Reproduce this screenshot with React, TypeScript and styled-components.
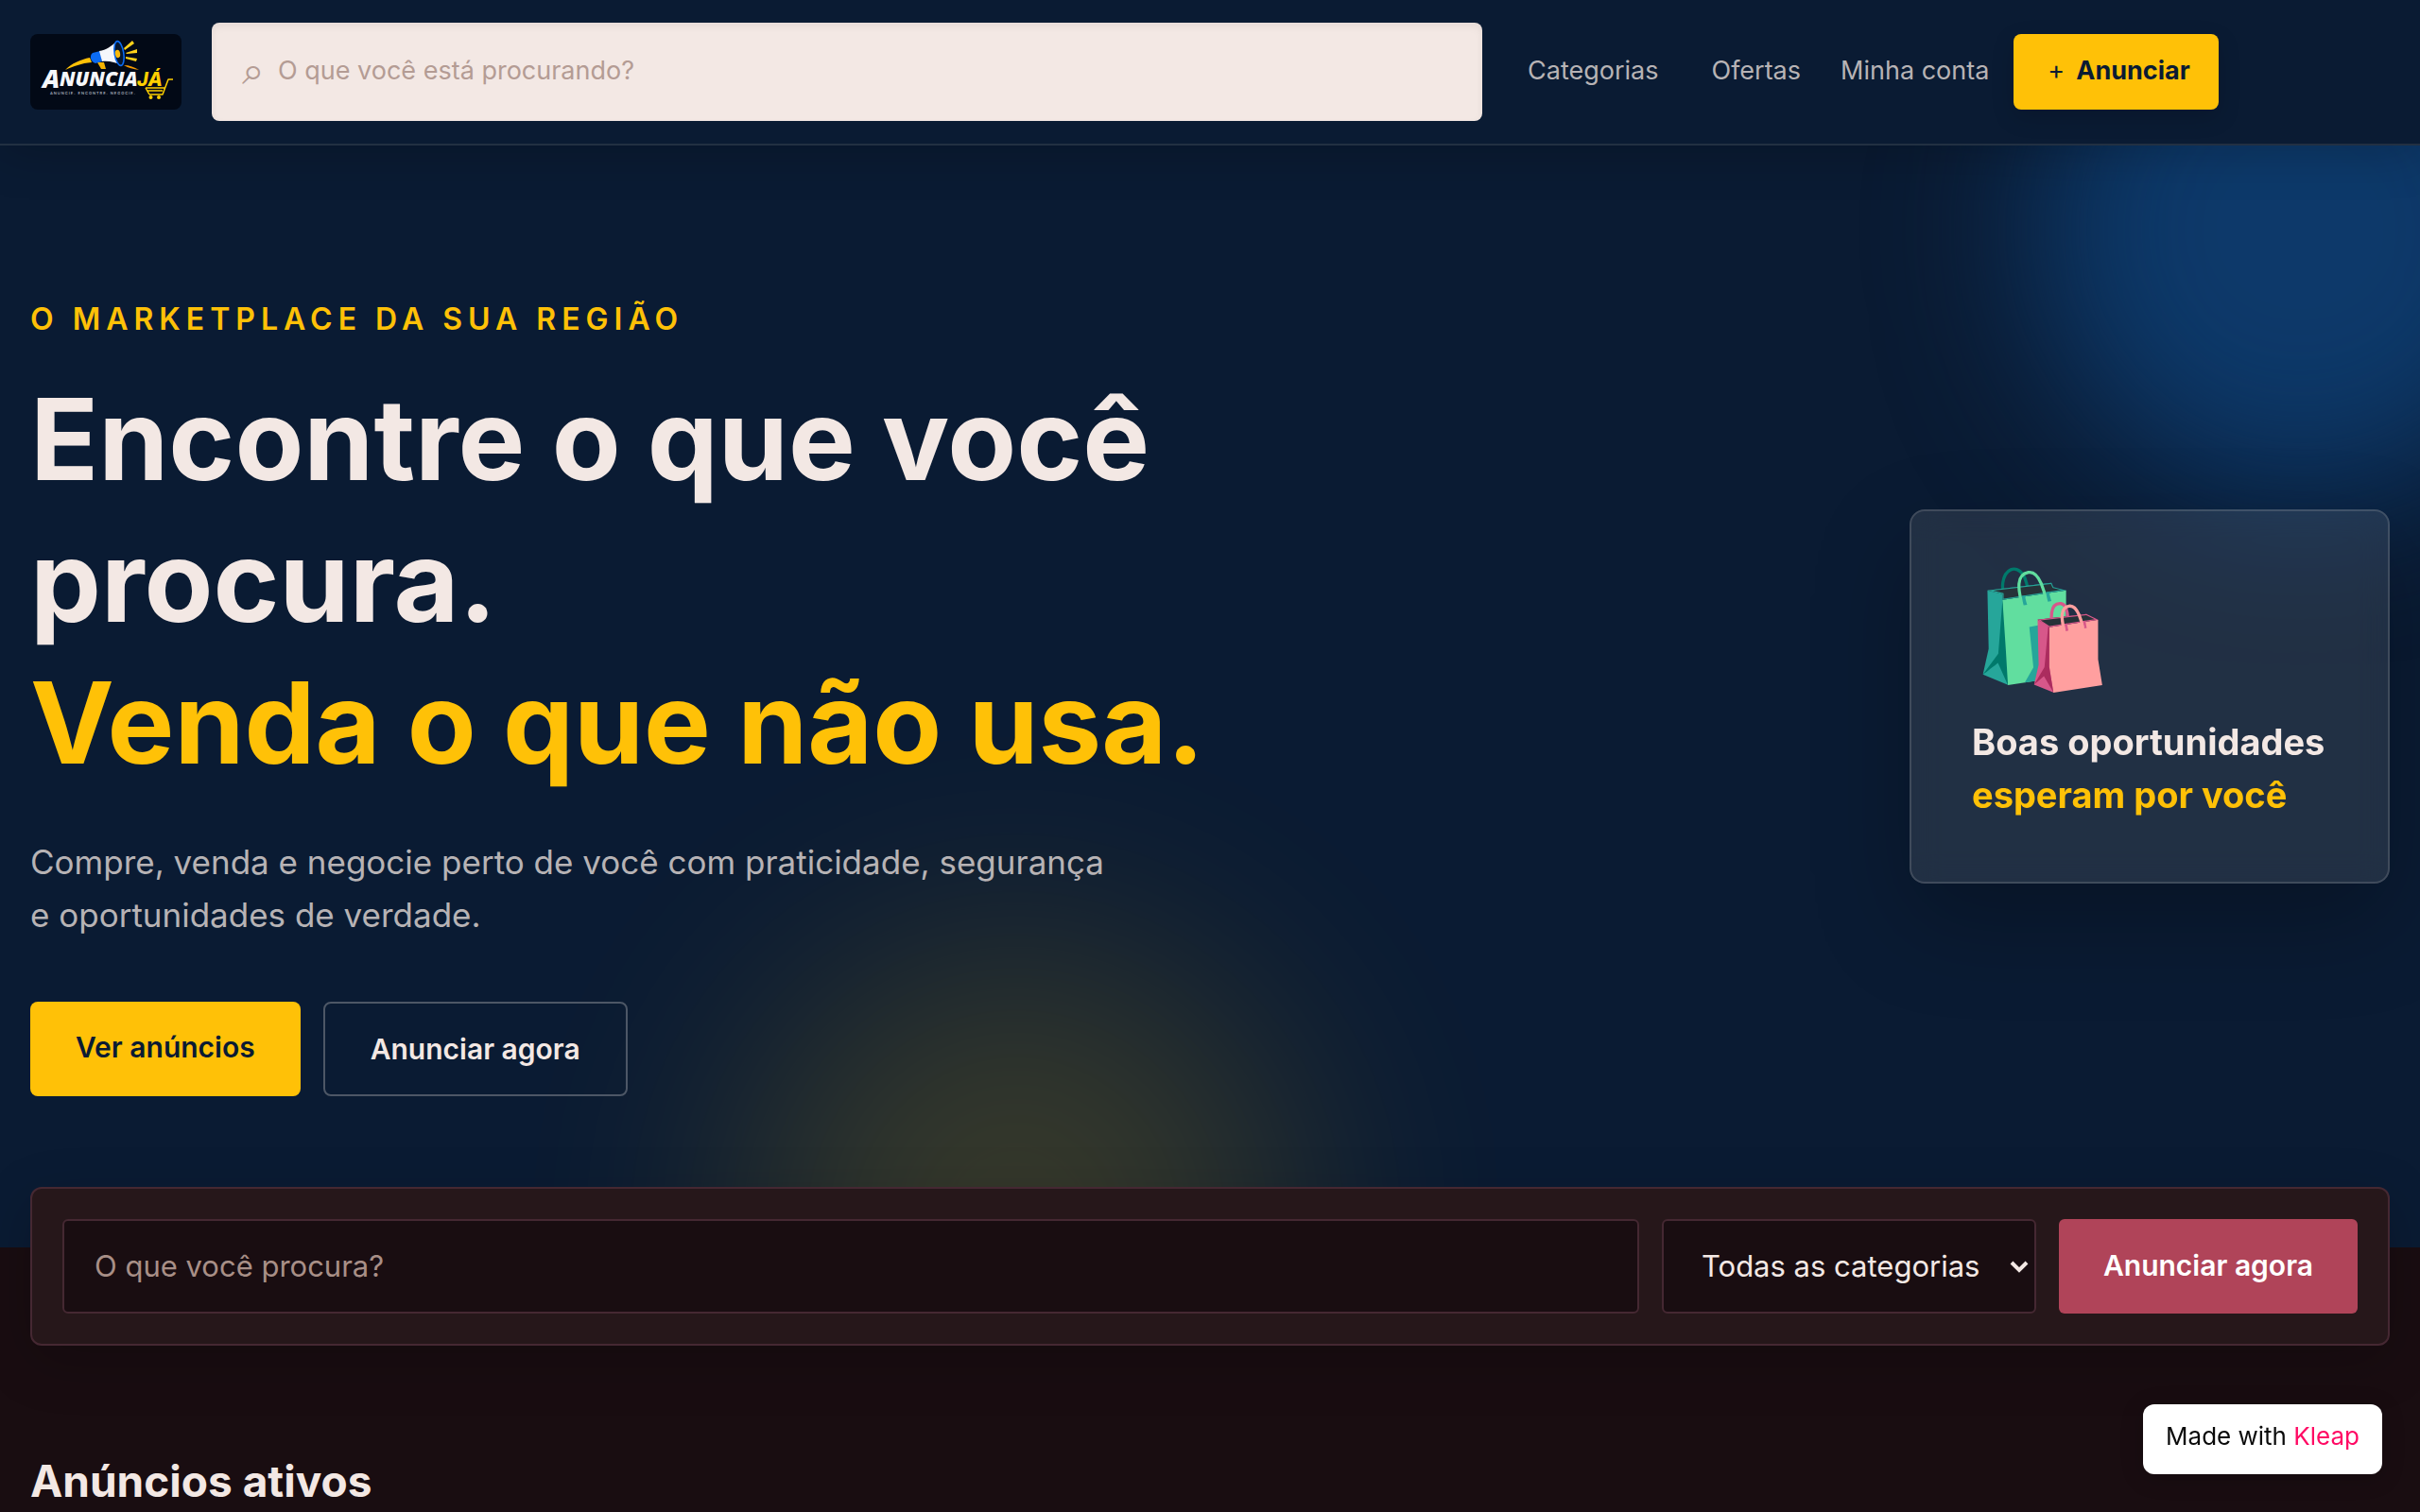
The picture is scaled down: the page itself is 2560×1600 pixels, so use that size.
import React from "react";
import styled, { createGlobalStyle, css } from "styled-components";

const color = {
  navy: "#0a1b33",
  night: "#190d11",
  panel: "#26171a",
  line: "#452832",
  cream: "#f3e8e4",
  yellow: "#ffc107",
  rose: "#b04459",
  muted: "#b7b3b5",
  hint: "#b49c94",
};

const GlobalStyle = createGlobalStyle`
  *, *::before, *::after { box-sizing: border-box; }
  body {
    margin: 0;
    background: ${color.night};
    color: ${color.cream};
    font-family: Inter, "Liberation Sans", sans-serif;
    overflow-x: hidden;
  }
  a { color: inherit; text-decoration: none; }
  button, input, select { font: inherit; }
  h1, h2, p { margin: 0; }
`;

const Header = styled.header`
  position: relative;
  z-index: 2;
  display: flex;
  align-items: center;
  padding: 24px 32px;
  background: ${color.navy};
  border-bottom: 2px solid #223042;
  box-shadow: 0 8px 48px rgba(0, 0, 0, 0.2);
`;

const LogoLink = styled.a`
  display: block;
  width: 160px;
  height: 80px;
  margin-right: 32px;
  border-radius: 8px;
  overflow: hidden;
  background: #020916;
  svg { display: block; }
`;

const SearchBox = styled.div`
  flex: 0 1 1344px;
  display: flex;
  align-items: center;
  gap: 14px;
  height: 104px;
  padding: 0 32px 4px;
  border-radius: 8px;
  background: ${color.cream};
  box-shadow: inset 0 4px 8px rgba(0, 0, 0, 0.06);
  color: ${color.hint};
  font-size: 27px;
  input {
    flex: 1;
    min-width: 0;
    padding: 0;
    border: 0;
    outline: 0;
    background: transparent;
    color: ${color.navy};
  }
  input::placeholder { color: ${color.hint}; opacity: 1; }
`;

const SearchGlyph = styled.span`
  font-size: 42px;
  line-height: 44px;
`;

const Nav = styled.nav`
  display: flex;
  align-items: center;
  gap: 24px;
  margin-left: 32px;
  color: ${color.muted};
  font-size: 27px;
  white-space: nowrap;
`;

const NavLink = styled.a<{ $padded?: boolean }>`
  padding: 0 ${(p) => (p.$padded ? 16 : 2)}px 4px;
`;

const AnnounceButton = styled.button`
  display: flex;
  align-items: center;
  gap: 12px;
  height: 80px;
  padding: 0 30px 4px 36px;
  border: 0;
  border-radius: 8px;
  background: ${color.yellow};
  box-shadow: 0 8px 24px rgba(0, 0, 0, 0.15);
  color: ${color.navy};
  font-size: 27px;
  font-weight: 700;
  span { font-weight: 400; }
`;

const Hero = styled.section`
  position: relative;
  overflow: hidden;
  display: flex;
  align-items: center;
  justify-content: space-between;
  padding: 160px 32px;
  background: ${color.navy};
`;

const Glow = styled.div<{ $tone: "blue" | "yellow" }>`
  position: absolute;
  border-radius: 50%;
  ${(p) =>
    p.$tone === "blue"
      ? css`
          top: -191px;
          right: -153px;
          width: 560px;
          height: 560px;
          background: #0d396a;
          filter: blur(80px);
        `
      : css`
          bottom: -260px;
          left: calc(42% - 290px);
          width: 580px;
          height: 580px;
          background: ${color.yellow};
          opacity: 0.18;
          filter: blur(128px);
        `}
`;

const Pitch = styled.div`
  position: relative;
  max-width: 1344px;
`;

const Eyebrow = styled.p`
  color: ${color.yellow};
  font-size: 32px;
  font-weight: 600;
  line-height: 48px;
  letter-spacing: 6px;
  text-transform: uppercase;
`;

const Title = styled.h1`
  margin-top: 28px;
  font-size: 119px;
  font-weight: 700;
  line-height: 150px;
  em { display: block; color: ${color.yellow}; font-style: normal; }
`;

const Lead = styled.p`
  max-width: 1160px;
  margin-top: 44px;
  color: ${color.muted};
  font-size: 35px;
  line-height: 56px;
`;

const Actions = styled.div`
  display: flex;
  gap: 24px;
  margin-top: 64px;
`;

const Action = styled.a<{ $outline?: boolean }>`
  padding: 24px 48px;
  border-radius: 8px;
  font-size: 30px;
  font-weight: 600;
  line-height: 48px;
  ${(p) =>
    p.$outline
      ? css`
          border: 2px solid #4d5766;
          color: ${color.cream};
        `
      : css`
          background: ${color.yellow};
          color: ${color.navy};
        `}
`;

const Card = styled.aside`
  position: relative;
  min-width: 508px;
  padding: 64px;
  border: 2px solid rgba(243, 232, 228, 0.15);
  border-radius: 16px;
  background: rgba(243, 232, 228, 0.1);
  box-shadow: 0 40px 100px rgba(0, 0, 0, 0.25);
  backdrop-filter: blur(16px);
  font-size: 38px;
  font-weight: 700;
  line-height: 56px;
  strong { display: block; color: ${color.yellow}; font-weight: 700; }
`;

const Bags = styled.div`
  margin-bottom: 32px;
  font-size: 120px;
  font-weight: 400;
  line-height: 120px;
`;

const SearchPanel = styled.form`
  position: relative;
  z-index: 1;
  display: flex;
  gap: 24px;
  margin: -64px 32px 0;
  padding: 32px;
  border: 2px solid ${color.line};
  border-radius: 12px;
  background: ${color.panel};
  box-shadow: 0 16px 60px rgba(0, 0, 0, 0.2);
  font-size: 31px;
`;

const field = css`
  height: 100px;
  border: 2px solid ${color.line};
  border-radius: 6px;
  outline: 0;
  background: ${color.night};
  color: ${color.cream};
`;

const QueryInput = styled.input`
  ${field}
  flex: 1;
  min-width: 0;
  padding: 0 32px 2px;
  &::placeholder { color: #a88f87; opacity: 1; }
`;

const SelectWrap = styled.div`
  position: relative;
  svg {
    position: absolute;
    right: 8px;
    top: 40px;
    pointer-events: none;
  }
`;

const CategorySelect = styled.select`
  ${field}
  width: 396px;
  padding: 0 40px 2px;
  appearance: none;
`;

const SubmitButton = styled.button`
  padding: 0 47px 2px;
  border: 0;
  border-radius: 6px;
  background: ${color.rose};
  color: #fff;
  font-size: 30px;
  font-weight: 600;
`;

const Listings = styled.section`
  padding: 112px 32px 0;
  h2 { font-size: 46px; font-weight: 700; line-height: 62px; }
`;

const MadeWith = styled.a`
  position: fixed;
  right: 40px;
  bottom: 40px;
  z-index: 3;
  padding: 16px 24px 22px;
  border-radius: 12px;
  background: #fff;
  box-shadow: 0 4px 24px rgba(0, 0, 0, 0.2);
  color: #0a0a0a;
  font-size: 26px;
  line-height: 36px;
  span { color: #ff0a64; }
`;

const LogoWord = styled.text<{ $tone: string; $size: number; $family?: string }>`
  font-family: ${(p) => p.$family ?? '"Open Sans"'}, sans-serif;
  font-style: italic;
  font-weight: 800;
  font-size: ${(p) => p.$size}px;
  fill: ${(p) => p.$tone};
`;

const LogoTag = styled.text`
  font-family: Inter, sans-serif;
  font-size: 4px;
  font-weight: 500;
  letter-spacing: 1px;
  fill: #b8bfcb;
`;

function Logo() {
  return (
    <svg width="160" height="80" viewBox="0 0 160 80" role="img" aria-label="AnunciaJá">
      <path d="M37 38C44 31 53 27 63 25L65 30C54 31 46 34 37 38Z" fill="#ffc107" />
      <path d="M71 30L78 30L80 37L75 37Z" fill="#f5b301" />
      <path d="M99 33C105 33 110 35 115 38C109 37 104 36 99 33Z" fill="#f59a00" />
      <path d="M66 20L74 18L76 29L69 31C64 30 62 23 66 20Z" fill="#0b6bf2" />
      <path d="M73 18C80 17 86 13 91 8L97 33C90 30 83 28 76 29Z" fill="#f5f7fb" />
      <ellipse cx="94" cy="20.500" rx="4.800" ry="13" transform="rotate(-9 94 20.500)" fill="#071730" stroke="#0b6bf2" strokeWidth="1.600" />
      <ellipse cx="92.500" cy="21" rx="2.600" ry="4.200" transform="rotate(-9 92.500 21)" fill="#f7b90b" />
      <path d="M99 15L108 7L110 10L100 17ZM101 20L113 16L113 20L102 21ZM101 24L113 26L112 29L101 26Z" fill="#ffd21a" />
      <LogoWord x="13" y="57" $tone="#f5f7fb" $size={27}>A</LogoWord>
      <LogoWord x="31" y="55" $tone="#f5f7fb" $size={21}>NUNCIA</LogoWord>
      <LogoWord x="113" y="55" $tone="#ffd000" $size={20} $family="Inter">JÁ</LogoWord>
      <LogoTag x="21" y="64">ANUNCIE. ENCONTRE. NEGOCIE.</LogoTag>
      <path d="M151 48H146L140 64H126M122 57L126 64M122 57H142M124 60H140" fill="none" stroke="#ffd000" strokeWidth="1.500" strokeLinejoin="round" />
      <circle cx="127.500" cy="67" r="2" fill="#ffd000" />
      <circle cx="136" cy="67" r="2" fill="#ffd000" />
    </svg>
  );
}

export default function App() {
  return (
    <>
      <GlobalStyle />
      <Header>
        <LogoLink href="#inicio"><Logo /></LogoLink>
        <SearchBox>
          <SearchGlyph aria-hidden="true">⌕</SearchGlyph>
          <input type="text" aria-label="Buscar" placeholder="O que você está procurando?" />
        </SearchBox>
        <Nav>
          <NavLink $padded href="#categorias">Categorias</NavLink>
          <NavLink $padded href="#ofertas">Ofertas</NavLink>
          <NavLink href="#conta">Minha conta</NavLink>
          <AnnounceButton type="button"><span>+</span>Anunciar</AnnounceButton>
        </Nav>
      </Header>
      <main>
        <Hero>
          <Glow $tone="blue" />
          <Glow $tone="yellow" />
          <Pitch>
            <Eyebrow>O marketplace da sua região</Eyebrow>
            <Title>
              Encontre o que você procura.
              <em>Venda o que não usa.</em>
            </Title>
            <Lead>
              Compre, venda e negocie perto de você com praticidade, segurança e oportunidades de verdade.
            </Lead>
            <Actions>
              <Action href="#anuncios">Ver anúncios</Action>
              <Action $outline href="#anunciar">Anunciar agora</Action>
            </Actions>
          </Pitch>
          <Card>
            <Bags>🛍️</Bags>
            Boas oportunidades
            <strong>esperam por você</strong>
          </Card>
        </Hero>
        <SearchPanel>
          <QueryInput type="text" aria-label="Procurar anúncios" placeholder="O que você procura?" />
          <SelectWrap>
            <CategorySelect aria-label="Categoria">
              <option>Todas as categorias</option>
            </CategorySelect>
            <svg width="20" height="20" viewBox="0 0 20 20" aria-hidden="true">
              <path d="M2 6L10 14L18 6" fill="none" stroke={color.cream} strokeWidth="4" />
            </svg>
          </SelectWrap>
          <SubmitButton type="button">Anunciar agora</SubmitButton>
        </SearchPanel>
        <Listings id="anuncios">
          <h2>Anúncios ativos</h2>
        </Listings>
      </main>
      <MadeWith href="#kleap">Made with <span>Kleap</span></MadeWith>
    </>
  );
}
